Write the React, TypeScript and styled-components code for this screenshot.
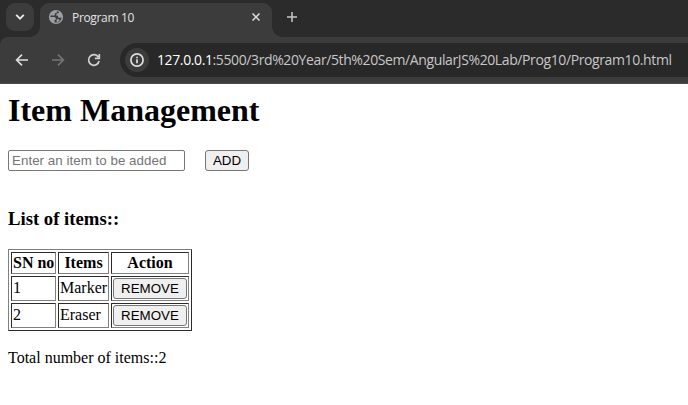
import React from "react";
import styled, { createGlobalStyle } from "styled-components";

const GlobalStyle = createGlobalStyle`
  body { margin: 0; background: #fff; overflow: hidden; }
`;

const Window = styled.div`
  height: 405px;
  overflow: hidden;
  font-family: "Liberation Serif", serif;
  font-size: 16px;
  color: #000;
`;

const TabStrip = styled.div`
  box-sizing: border-box;
  display: flex;
  align-items: flex-start;
  height: 37px;
  padding: 3px 0 0 6px;
  background: #2b2b2b;
`;

const TabSearch = styled.button`
  display: grid;
  place-items: center;
  width: 28px;
  height: 28px;
  padding: 0;
  border: 0;
  border-radius: 9px;
  background: #3c3c3c;
`;

const Tab = styled.div`
  position: relative;
  box-sizing: border-box;
  display: flex;
  align-items: center;
  width: 232px;
  height: 34px;
  margin-left: 6px;
  padding: 0 9px 6px 8px;
  border-radius: 9px 9px 0 0;
  background: #3c3c3c;

  &::before,
  &::after {
    content: "";
    position: absolute;
    bottom: 0;
    width: 10px;
    height: 10px;
  }
  &::before {
    right: 100%;
    background: radial-gradient(circle at 0 0, transparent 9.5px, #3c3c3c 10px);
  }
  &::after {
    left: 100%;
    background: radial-gradient(circle at 100% 0, transparent 9.5px, #3c3c3c 10px);
  }
`;

const TabTitle = styled.span`
  flex: 1;
  margin: 1px 0 0 8px;
  font: 12px/16px "Open Sans", sans-serif;
  letter-spacing: -0.34px;
  color: #e3e3e3;
`;

const NewTab = styled.button`
  display: grid;
  place-items: center;
  width: 28px;
  height: 28px;
  margin-left: 6px;
  padding: 0;
  border: 0;
  background: transparent;
`;

const Toolbar = styled.div`
  box-sizing: border-box;
  display: flex;
  align-items: center;
  height: 47px;
  padding: 0 0 1px 14px;
  border-bottom: 1px solid #4a4a4a;
  border-top-left-radius: 8px;
  background: #3c3c3c;
`;

const ToolbarArea = styled.div`
  background: #2b2b2b;
`;

const NavIcons = styled.div`
  display: flex;
  gap: 20px;
  width: 106px;
`;

const AddressBar = styled.div`
  box-sizing: border-box;
  display: flex;
  align-items: center;
  flex: 1;
  height: 34px;
  padding-left: 5px;
  border-radius: 17px 0 0 17px;
  background: #282828;
`;

const SiteInfo = styled.span`
  display: grid;
  place-items: center;
  width: 24px;
  height: 24px;
  border-radius: 50%;
  background: #3c3c3c;
`;

const Url = styled.span`
  margin-left: 8px;
  font: 14px/20px "Open Sans", sans-serif;
  letter-spacing: -0.39px;
  white-space: nowrap;
  color: #c7c7c7;
`;

const Host = styled.span`
  color: #fff;
`;

const Page = styled.main`
  padding: 8px;
`;

const Title = styled.h1`
  margin: 0;
  font-size: 32px;
  line-height: 37px;
`;

const ItemForm = styled.div`
  display: flex;
  gap: 20px;
  margin-top: 21px;
`;

const ItemInput = styled.input`
  box-sizing: border-box;
  width: 177px;
  height: 21px;
  padding: 1px 2px 1px 3px;
  border: 1px solid #767676;
  border-radius: 2px;
  background: #fff;
  font: 13.333px "Liberation Sans", sans-serif;
  letter-spacing: 0.04px;

  &::placeholder { color: #757575; }
`;

const Button = styled.button<{ $width: number }>`
  box-sizing: border-box;
  display: block;
  width: ${(p) => p.$width}px;
  height: 21px;
  padding: 1px 0;
  border: 1px solid #767676;
  border-radius: 3px;
  background: #efefef;
  color: #000;
  font: 13.333px "Liberation Sans", sans-serif;
`;

const ListHeading = styled.h3`
  margin: 37px 0 19px;
  font-size: 18.72px;
  line-height: 22px;
`;

const ItemTable = styled.table`
  width: 184px;
  table-layout: fixed;
  border: 1px solid;
  border-color: #808080 #2c2c2c #2c2c2c #808080;
  border-spacing: 2px;
`;

const Col = styled.col<{ $width: number }>`
  width: ${(p) => p.$width}px;
`;

const Cell = styled.td<{ $height: number }>`
  box-sizing: border-box;
  height: ${(p) => p.$height}px;
  padding: 1px;
  border: 1px solid;
  border-color: #2c2c2c #808080 #808080 #2c2c2c;
  line-height: 18px;
  white-space: nowrap;
`;

const ValueCell = styled(Cell)`
  padding-bottom: 2px;
`;

const Total = styled.p`
  margin: 18px 0 0;
  line-height: 18px;
`;

const items = ["Marker", "Eraser"];

export default function App() {
  return (
    <Window>
      <GlobalStyle />
      <TabStrip>
        <TabSearch aria-label="Search tabs">
          <svg width="10" height="8" viewBox="0 0 10 8" fill="none" stroke="#e8e8e8" strokeWidth="1.9">
            <path d="M1.2 1.8 5 5.6l3.8-3.8" />
          </svg>
        </TabSearch>
        <Tab>
          <svg width="16" height="16" viewBox="0 0 16 16">
            <circle cx="8" cy="8" r="7.1" fill="#9aa0a6" />
            <path
              d="M8.8 2.2c.2 1-.2 1.8-1.2 2-.8.1-1 .4-.8 1.2.1.8-.3 1.2-1.2 1.2H2.6L2.3 8.1H6c1.1 0 1.9.8 1.9 1.9v.8H6.6v2.6c.5.2 1 .2 1.6.2A5.6 5.6 0 0 0 13.6 8c-.3.5-.8.7-1.4.7h-.8c-.9 0-1.3-.5-1.3-1.3v-.7H8.4V5.4c0-.8.4-1.2 1.2-1.2h.8c0-.7.3-1.1.8-1.3a5.5 5.5 0 0 0-2.4-.7Z"
              fill="#3c3c3c"
            />
            <path d="M8.6 10.2h1.6c.9 0 1.3.5 1.4 1.2l-1.7 1.5H8.6Z" fill="#9aa0a6" />
          </svg>
          <TabTitle>Program 10</TabTitle>
          <svg width="14" height="14" viewBox="0 0 14 14" stroke="#dedede" strokeWidth="1.5">
            <path d="m3.5 3.5 7 7m0-7-7 7" />
          </svg>
        </Tab>
        <NewTab aria-label="New tab">
          <svg width="12" height="12" viewBox="0 0 12 12" stroke="#c7c7c7" strokeWidth="1.5">
            <path d="M6 1v10M1 6h10" />
          </svg>
        </NewTab>
      </TabStrip>
      <ToolbarArea>
        <Toolbar>
          <NavIcons>
            <svg width="16" height="16" viewBox="0 0 16 16" fill="none" stroke="#dedede" strokeWidth="1.6">
              <path d="M14 8H3M8 2.6 2.6 8 8 13.4" />
            </svg>
            <svg width="16" height="16" viewBox="0 0 16 16" fill="none" stroke="#757575" strokeWidth="1.6">
              <path d="M2 8h11M8 2.6 13.4 8 8 13.4" />
            </svg>
            <svg width="16" height="16" viewBox="0 0 16 16" fill="none" stroke="#d0d0d0" strokeWidth="1.7">
              <path d="M13.1 9A5.3 5.3 0 1 1 12.3 5M13.3 2v4.4H8.9" />
            </svg>
          </NavIcons>
          <AddressBar>
            <SiteInfo>
              <svg width="16" height="16" viewBox="0 0 16 16" fill="none" stroke="#dedede" strokeWidth="1.7">
                <circle cx="8" cy="8" r="6.1" />
                <path d="M8 7.2v4M8 4.7v1.5" />
              </svg>
            </SiteInfo>
            <Url>
              <Host>127.0.0.1</Host>:5500/3rd%20Year/5th%20Sem/AngularJS%20Lab/Prog10/Program10.html
            </Url>
          </AddressBar>
        </Toolbar>
      </ToolbarArea>
      <Page>
        <Title>Item Management</Title>
        <ItemForm>
          <ItemInput placeholder="Enter an item to be added" />
          <Button $width={44}>ADD</Button>
        </ItemForm>
        <ListHeading>List of items::</ListHeading>
        <ItemTable>
          <colgroup>
            <Col $width={45} />
            <Col $width={51} />
            <Col $width={78} />
          </colgroup>
          <thead>
            <tr>
              <Cell as="th" $height={22}>SN no</Cell>
              <Cell as="th" $height={22}>Items</Cell>
              <Cell as="th" $height={22}>Action</Cell>
            </tr>
          </thead>
          <tbody>
            {items.map((item, i) => (
              <tr key={item}>
                <ValueCell $height={25}>{i + 1}</ValueCell>
                <ValueCell $height={25}>{item}</ValueCell>
                <Cell $height={25}>
                  <Button $width={74}>REMOVE</Button>
                </Cell>
              </tr>
            ))}
          </tbody>
        </ItemTable>
        <Total>Total number of items::{items.length}</Total>
      </Page>
    </Window>
  );
}
